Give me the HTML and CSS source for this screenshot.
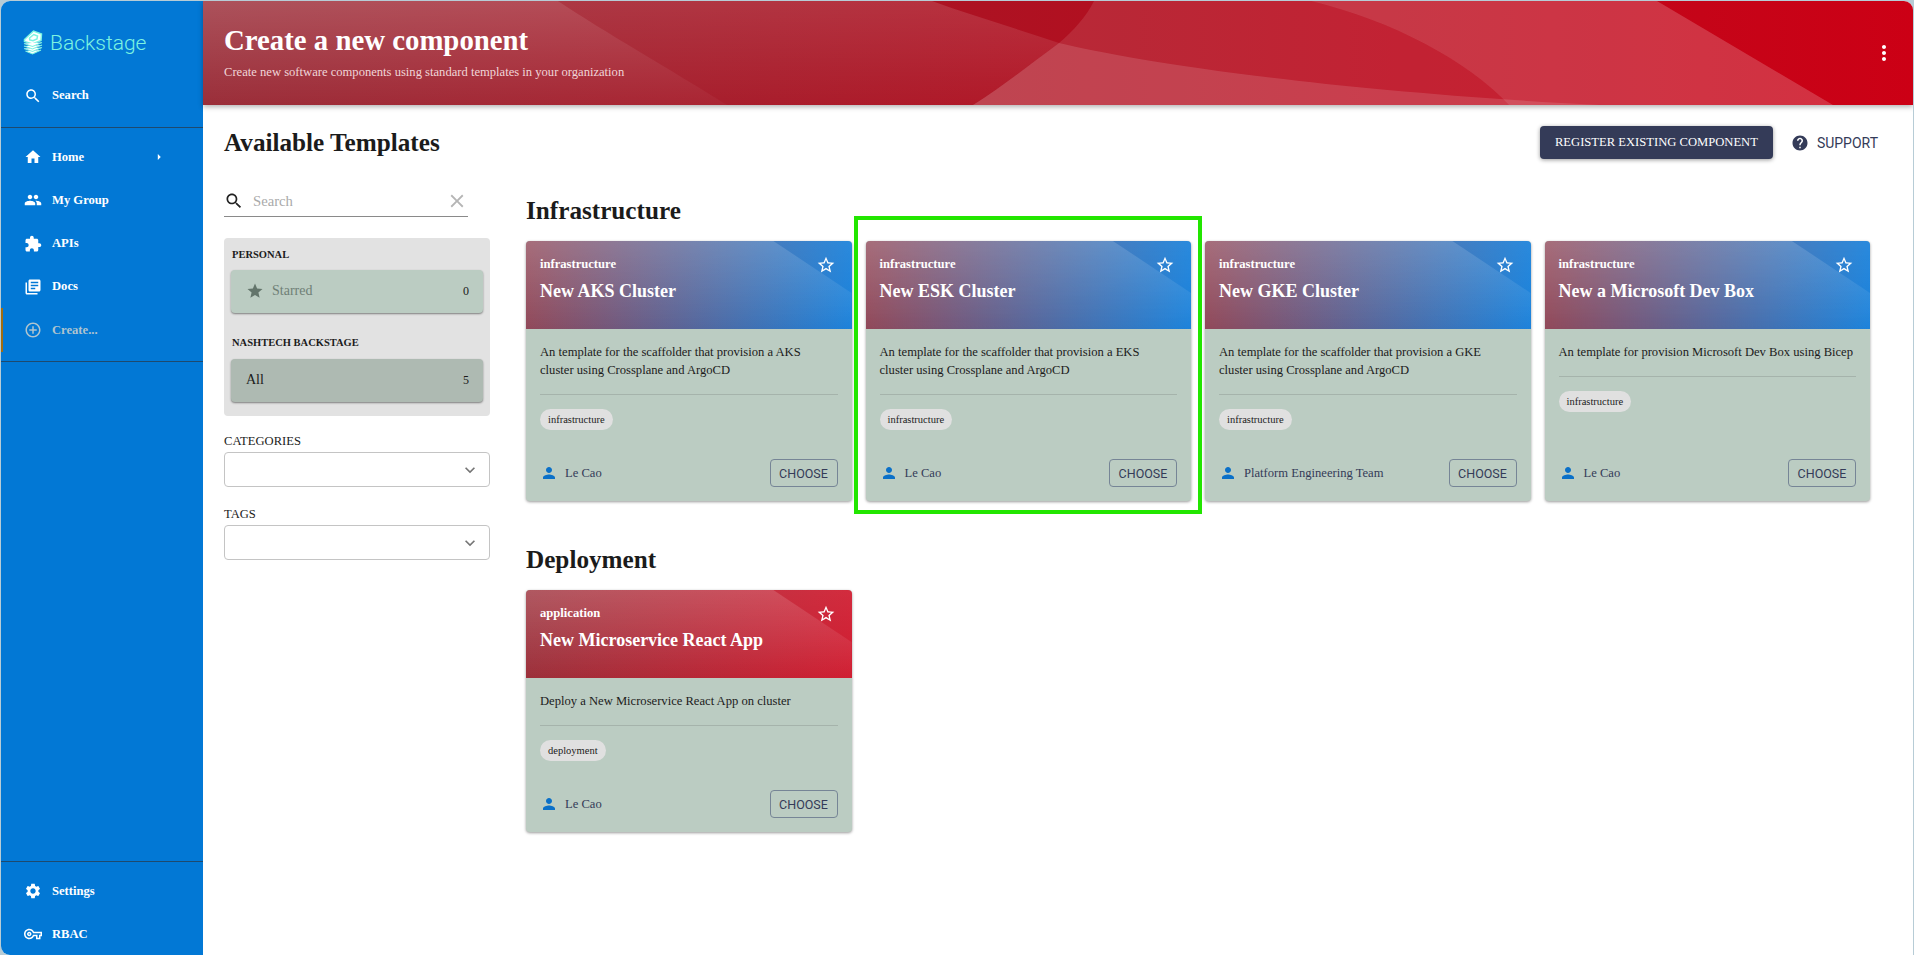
FILE: index.html
```html
<!DOCTYPE html>
<html lang="en">

<head>
    <meta charset="UTF-8">
    <meta name="viewport" content="width=device-width, initial-scale=1.0">
    <title>Create a new component</title>
    <link rel="stylesheet" href="styles.css">
</head>

<body>

    <svg class="sprite" width="0" height="0">
        <symbol id="i-search" viewBox="0 0 24 24"><path d="M15.5 14h-.79l-.28-.27C15.41 12.59 16 11.11 16 9.5 16 5.91 13.09 3 9.5 3S3 5.91 3 9.5 5.91 16 9.5 16c1.61 0 3.09-.59 4.23-1.57l.27.28v.79l5 4.99L20.49 19l-4.99-5zm-6 0C7.01 14 5 11.99 5 9.5S7.01 5 9.5 5 14 7.01 14 9.5 11.99 14 9.5 14z"/></symbol>
        <symbol id="i-home" viewBox="0 0 24 24"><path d="M10 20v-6h4v6h5v-8h3L12 3 2 12h3v8z"/></symbol>
        <symbol id="i-group" viewBox="0 0 24 24"><path d="M16 11c1.66 0 2.99-1.34 2.99-3S17.66 5 16 5c-1.66 0-3 1.34-3 3s1.34 3 3 3zm-8 0c1.66 0 2.99-1.34 2.99-3S9.66 5 8 5C6.34 5 5 6.34 5 8s1.34 3 3 3zm0 2c-2.33 0-7 1.17-7 3.5V19h14v-2.5c0-2.33-4.67-3.5-7-3.5zm8 0c-.29 0-.62.02-.97.05 1.16.84 1.97 1.97 1.97 3.45V19h6v-2.5c0-2.33-4.67-3.5-7-3.5z"/></symbol>
        <symbol id="i-puzzle" viewBox="0 0 24 24"><path d="M20.5 11H19V7c0-1.1-.9-2-2-2h-4V3.5C13 2.12 11.88 1 10.5 1S8 2.12 8 3.5V5H4c-1.1 0-1.99.9-1.99 2v3.8H3.5c1.49 0 2.7 1.21 2.7 2.7s-1.21 2.7-2.7 2.7H2V20c0 1.1.9 2 2 2h3.8v-1.5c0-1.49 1.21-2.7 2.7-2.7 1.49 0 2.7 1.21 2.7 2.7V22H17c1.1 0 2-.9 2-2v-4h1.5c1.38 0 2.5-1.12 2.5-2.5S21.88 11 20.5 11z"/></symbol>
        <symbol id="i-docs" viewBox="0 0 24 24"><path d="M4 6H2v14c0 1.1.9 2 2 2h14v-2H4V6zm16-4H8c-1.1 0-2 .9-2 2v12c0 1.1.9 2 2 2h12c1.1 0 2-.9 2-2V4c0-1.1-.9-2-2-2zm-1 9H9V9h10v2zm-4 4H9v-2h6v2zm4-8H9V5h10v2z"/></symbol>
        <symbol id="i-add" viewBox="0 0 24 24"><path d="M13 7h-2v4H7v2h4v4h2v-4h4v-2h-4V7zm-1-5C6.48 2 2 6.48 2 12s4.48 10 10 10 10-4.48 10-10S17.52 2 12 2zm0 18c-4.41 0-8-3.59-8-8s3.59-8 8-8 8 3.59 8 8-3.59 8-8 8z"/></symbol>
        <symbol id="i-settings" viewBox="0 0 24 24"><path d="M19.14 12.94c.04-.3.06-.61.06-.94 0-.32-.02-.64-.07-.94l2.03-1.58c.18-.14.23-.41.12-.61l-1.92-3.32c-.12-.22-.37-.29-.59-.22l-2.39.96c-.5-.38-1.03-.7-1.62-.94l-.36-2.54c-.04-.24-.24-.41-.48-.41h-3.84c-.24 0-.43.17-.47.41l-.36 2.54c-.59.24-1.13.57-1.62.94l-2.39-.96c-.22-.08-.47 0-.59.22L2.74 8.87c-.12.21-.08.47.12.61l2.03 1.58c-.05.3-.09.63-.09.94s.02.64.07.94l-2.03 1.58c-.18.14-.23.41-.12.61l1.92 3.32c.12.22.37.29.59.22l2.39-.96c.5.38 1.03.7 1.62.94l.36 2.54c.05.24.24.41.48.41h3.84c.24 0 .44-.17.47-.41l.36-2.54c.59-.24 1.13-.56 1.62-.94l2.39.96c.22.08.47 0 .59-.22l1.92-3.32c.12-.22.07-.47-.12-.61l-2.01-1.58zM12 15.6c-1.98 0-3.6-1.62-3.6-3.6s1.62-3.6 3.6-3.6 3.6 1.62 3.6 3.6-1.62 3.6-3.6 3.6z"/></symbol>
        <symbol id="i-key" viewBox="0 0 24 24"><path d="M22 19h-6v-4h-2.68c-1.14 2.42-3.6 4-6.32 4-3.86 0-7-3.14-7-7s3.14-7 7-7c2.72 0 5.17 1.58 6.32 4H24v6h-2v4zm-4-2h2v-4h2v-2H11.94l-.23-.67C11.01 8.34 9.11 7 7 7c-2.76 0-5 2.24-5 5s2.24 5 5 5c2.11 0 4.01-1.34 4.71-3.33l.23-.67H18v4zM7 15c-1.65 0-3-1.35-3-3s1.35-3 3-3 3 1.35 3 3-1.35 3-3 3zm0-4c-.55 0-1 .45-1 1s.45 1 1 1 1-.45 1-1-.45-1-1-1z"/></symbol>
        <symbol id="i-star" viewBox="0 0 24 24"><path d="M12 17.27L18.18 21l-1.64-7.03L22 9.24l-7.19-.61L12 2 9.19 8.63 2 9.24l5.46 4.73L5.82 21z"/></symbol>
        <symbol id="i-star-border" viewBox="0 0 24 24"><path d="M22 9.24l-7.19-.62L12 2 9.19 8.63 2 9.24l5.46 4.73L5.82 21 12 17.27 18.18 21l-1.63-7.03L22 9.24zM12 15.4l-3.76 2.27 1-4.28-3.32-2.88 4.38-.38L12 6.1l1.71 4.04 4.38.38-3.32 2.88 1 4.28L12 15.4z"/></symbol>
        <symbol id="i-person" viewBox="0 0 24 24"><path d="M12 12c2.21 0 4-1.79 4-4s-1.79-4-4-4-4 1.79-4 4 1.79 4 4 4zm0 2c-2.67 0-8 1.34-8 4v2h16v-2c0-2.66-5.33-4-8-4z"/></symbol>
        <symbol id="i-help" viewBox="0 0 24 24"><path d="M12 2C6.48 2 2 6.48 2 12s4.48 10 10 10 10-4.48 10-10S17.52 2 12 2zm1 17h-2v-2h2v2zm2.07-7.75l-.9.92C13.45 12.9 13 13.5 13 15h-2v-.5c0-1.1.45-2.1 1.17-2.83l1.24-1.26c.37-.36.59-.86.59-1.41 0-1.1-.9-2-2-2s-2 .9-2 2H8c0-2.21 1.79-4 4-4s4 1.79 4 4c0 .88-.36 1.68-.93 2.25z"/></symbol>
        <symbol id="i-close" viewBox="0 0 24 24"><path d="M19 6.41L17.59 5 12 10.59 6.41 5 5 6.41 10.59 12 5 17.59 6.41 19 12 13.41 17.59 19 19 17.59 13.41 12z"/></symbol>
        <symbol id="i-expand" viewBox="0 0 24 24"><path d="M16.59 8.59L12 13.17 7.41 8.59 6 10l6 6 6-6z"/></symbol>
        <symbol id="i-more" viewBox="0 0 24 24"><path d="M12 8c1.1 0 2-.9 2-2s-.9-2-2-2-2 .9-2 2 .9 2 2 2zm0 2c-1.1 0-2 .9-2 2s.9 2 2 2 2-.9 2-2-.9-2-2-2zm0 6c-1.1 0-2 .9-2 2s.9 2 2 2 2-.9 2-2-.9-2-2-2z"/></symbol>
        <symbol id="i-caret" viewBox="0 0 24 24"><path d="M10 17l5-5-5-5v10z"/></symbol>
    </svg>

    <div class="app">

        <nav class="sidebar">
            <div class="logo">
                <svg class="logo-mark" viewBox="0 0 20 25" fill="none" stroke="#7df3e1" stroke-width="1.1">
                    <path d="M1.5 9.5 10.5 1 18.5 4 18 10.5 9.5 14 1.5 11.5Z" stroke-width="1.5"/>
                    <path d="M6.5 8 10.8 4.5 14.5 6 14 9 10 10.8 6.8 10Z" stroke-width="1.5"/>
                    <path d="M1 13.5 9.5 16.5 19 12.5M1 16 9.5 19 19 15M1 18.5 9.5 21.5 19 17.5M2.5 21 9.5 24 18 20"/>
                </svg>
                <span class="logo-text">Backstage</span>
            </div>

            <a class="nav-item"><svg class="nav-icon"><use href="#i-search"/></svg>Search</a>
            <div class="nav-divider first"></div>

            <div class="nav-group">
                <a class="nav-item"><svg class="nav-icon"><use href="#i-home"/></svg>Home<svg class="nav-caret"><use href="#i-caret"/></svg></a>
                <a class="nav-item"><svg class="nav-icon"><use href="#i-group"/></svg>My Group</a>
                <a class="nav-item"><svg class="nav-icon"><use href="#i-puzzle"/></svg>APIs</a>
                <a class="nav-item"><svg class="nav-icon"><use href="#i-docs"/></svg>Docs</a>
                <a class="nav-item active"><svg class="nav-icon"><use href="#i-add"/></svg>Create...</a>
            </div>
            <div class="nav-divider second"></div>

            <div class="nav-bottom">
                <div class="nav-divider"></div>
                <a class="nav-item"><svg class="nav-icon"><use href="#i-settings"/></svg>Settings</a>
                <a class="nav-item"><svg class="nav-icon"><use href="#i-key"/></svg>RBAC</a>
            </div>
        </nav>

        <main class="main">
            <header class="page-header">
                <svg class="waves" viewBox="0 0 1710 104" preserveAspectRatio="none">
                    <defs>
                        <linearGradient id="fade-left" x1="0" y1="0" x2="0" y2="1">
                            <stop offset="0" stop-color="#fff" stop-opacity=".22"/>
                            <stop offset="1" stop-color="#fff" stop-opacity=".06"/>
                        </linearGradient>
                        <linearGradient id="fade-mid" x1="0" y1="0" x2="0" y2="1">
                            <stop offset="0" stop-color="#fff" stop-opacity=".13"/>
                            <stop offset="1" stop-color="#fff" stop-opacity=".03"/>
                        </linearGradient>
                    </defs>
                    <path d="M0 0H355C400 30 470 70 524 104H0Z" fill="url(#fade-left)"/>
                    <path d="M355 0H729C770 15 815 28 856 42 825 65 800 85 770 104H524C470 70 400 30 355 0Z" fill="url(#fade-mid)"/>
                    <path d="M891 0C883 16 870 30 856 42 825 65 800 85 770 104H1306C1265 60 1190 20 1108 0Z" fill="#fff" fill-opacity=".1"/>
                    <path d="M856 42C930 60 1120 90 1397 104H770C800 85 825 65 856 42Z" fill="#fff" fill-opacity=".13"/>
                    <path d="M1108 0C1190 20 1265 60 1306 104H1630L1454 0Z" fill="#fff" fill-opacity=".19"/>
                </svg>
                <div class="header-text">
                    <h1>Create a new component</h1>
                    <p>Create new software components using standard templates in your organization</p>
                </div>
                <svg class="header-more"><use href="#i-more"/></svg>
            </header>

            <div class="content">
                <div class="content-head">
                    <h2 class="content-title">Available Templates</h2>
                    <a class="btn-register">REGISTER EXISTING COMPONENT</a>
                    <a class="btn-support"><svg><use href="#i-help"/></svg>SUPPORT</a>
                </div>

                <div class="layout">
                    <aside class="filters">
                        <div class="search">
                            <svg class="search-icon"><use href="#i-search"/></svg>
                            <span class="search-text">Search</span>
                            <svg class="search-clear"><use href="#i-close"/></svg>
                        </div>

                        <div class="panel">
                            <div class="panel-label">PERSONAL</div>
                            <div class="panel-item starred">
                                <svg><use href="#i-star"/></svg>
                                <span>Starred</span>
                                <b>0</b>
                            </div>
                            <div class="panel-label second">NASHTECH BACKSTAGE</div>
                            <div class="panel-item selected">
                                <span>All</span>
                                <b>5</b>
                            </div>
                        </div>

                        <div class="field-label">CATEGORIES</div>
                        <div class="select"><svg><use href="#i-expand"/></svg></div>
                        <div class="field-label tags">TAGS</div>
                        <div class="select"><svg><use href="#i-expand"/></svg></div>
                    </aside>

                    <section class="templates">
                        <h3>Infrastructure</h3>
                        <div class="grid">

                            <article class="card">
                                <div class="card-head blue">
                                    <div class="card-type">infrastructure</div>
                                    <div class="card-title">New AKS Cluster</div>
                                    <svg class="card-star"><use href="#i-star-border"/></svg>
                                </div>
                                <div class="card-body">
                                    <p>An template for the scaffolder that provision a AKS cluster using Crossplane and ArgoCD</p>
                                    <hr>
                                    <span class="chip">infrastructure</span>
                                    <div class="card-foot">
                                        <svg class="owner-icon"><use href="#i-person"/></svg>
                                        <span class="owner">Le Cao</span>
                                        <a class="btn-choose">CHOOSE</a>
                                    </div>
                                </div>
                            </article>

                            <article class="card">
                                <div class="highlight"></div>
                                <div class="card-head blue">
                                    <div class="card-type">infrastructure</div>
                                    <div class="card-title">New ESK Cluster</div>
                                    <svg class="card-star"><use href="#i-star-border"/></svg>
                                </div>
                                <div class="card-body">
                                    <p>An template for the scaffolder that provision a EKS cluster using Crossplane and ArgoCD</p>
                                    <hr>
                                    <span class="chip">infrastructure</span>
                                    <div class="card-foot">
                                        <svg class="owner-icon"><use href="#i-person"/></svg>
                                        <span class="owner">Le Cao</span>
                                        <a class="btn-choose">CHOOSE</a>
                                    </div>
                                </div>
                            </article>

                            <article class="card">
                                <div class="card-head blue">
                                    <div class="card-type">infrastructure</div>
                                    <div class="card-title">New GKE Cluster</div>
                                    <svg class="card-star"><use href="#i-star-border"/></svg>
                                </div>
                                <div class="card-body">
                                    <p>An template for the scaffolder that provision a GKE cluster using Crossplane and ArgoCD</p>
                                    <hr>
                                    <span class="chip">infrastructure</span>
                                    <div class="card-foot">
                                        <svg class="owner-icon"><use href="#i-person"/></svg>
                                        <span class="owner">Platform Engineering Team</span>
                                        <a class="btn-choose">CHOOSE</a>
                                    </div>
                                </div>
                            </article>

                            <article class="card">
                                <div class="card-head blue">
                                    <div class="card-type">infrastructure</div>
                                    <div class="card-title">New a Microsoft Dev Box</div>
                                    <svg class="card-star"><use href="#i-star-border"/></svg>
                                </div>
                                <div class="card-body">
                                    <p>An template for provision Microsoft Dev Box using Bicep</p>
                                    <hr>
                                    <span class="chip">infrastructure</span>
                                    <div class="card-foot">
                                        <svg class="owner-icon"><use href="#i-person"/></svg>
                                        <span class="owner">Le Cao</span>
                                        <a class="btn-choose">CHOOSE</a>
                                    </div>
                                </div>
                            </article>
                        </div>

                        <h3 class="second">Deployment</h3>
                        <div class="grid">
                            <article class="card">
                                <div class="card-head red">
                                    <div class="card-type">application</div>
                                    <div class="card-title">New Microservice React App</div>
                                    <svg class="card-star"><use href="#i-star-border"/></svg>
                                </div>
                                <div class="card-body">
                                    <p>Deploy a New Microservice React App on cluster</p>
                                    <hr>
                                    <span class="chip">deployment</span>
                                    <div class="card-foot">
                                        <svg class="owner-icon"><use href="#i-person"/></svg>
                                        <span class="owner">Le Cao</span>
                                        <a class="btn-choose">CHOOSE</a>
                                    </div>
                                </div>
                            </article>
                        </div>
                    </section>
                </div>
            </div>
        </main>
    </div>

</body>

</html>
```

FILE: styles.css
```css
* {
    box-sizing: border-box;
}

html, body {
    height: 100%;
}

body {
    margin: 0;
    padding: 1px 1px 0;
    overflow: hidden;
    background-color: #b7ccd6;
    font-family: "Liberation Serif", serif;
    color: #1b1b1b;
}

.sprite {
    position: absolute;
}

svg {
    fill: currentColor;
}

.app {
    display: flex;
    height: 954px;
    background-color: #fff;
    border-radius: 9px 9px 0 9px;
    overflow: hidden;
}

/* sidebar */
.sidebar {
    display: flex;
    flex-direction: column;
    flex: 0 0 202px;
    background-color: #0278d5;
    color: #fff;
}

.logo {
    display: flex;
    align-items: center;
    height: 73px;
    padding: 11px 0 1px 22px;
}

.logo-mark {
    width: 20px;
    height: 25px;
    margin-right: 7px;
}

.logo-text {
    font-family: Roboto, sans-serif;
    font-size: 21px;
    font-weight: 300;
    color: #7df3e1;
}

.nav-item {
    display: flex;
    align-items: center;
    height: 43.2px;
    padding-left: 23px;
    font-size: 12.6px;
    font-weight: 700;
}

.nav-item.active {
    border-left: 2px solid #a16c10;
    padding-left: 21px;
    color: #afc4cf;
}

.nav-icon {
    flex: none;
    width: 18px;
    height: 18px;
    margin-right: 10px;
}

.nav-caret {
    width: 14px;
    height: 14px;
    margin-left: 68px;
}

.nav-divider {
    height: 1px;
    background-color: #1e4a6e;
}

.nav-divider.first {
    margin-top: 10px;
    margin-bottom: 7.5px;
}

.nav-divider.second {
    margin-top: 9.5px;
}

.nav-bottom {
    margin-top: auto;
    margin-bottom: -1px;
}

.nav-bottom .nav-divider {
    margin-bottom: 8px;
}

/* header */
.main {
    flex: 1;
    min-width: 0;
}

.page-header {
    position: relative;
    display: flex;
    align-items: flex-start;
    justify-content: space-between;
    height: 104px;
    padding: 22px 21px 0;
    background-image: linear-gradient(90deg, #94212d, #cc0015);
    box-shadow: 0 2px 5px rgba(0, 0, 0, .3);
    color: #fff;
}

.waves {
    position: absolute;
    top: 0;
    left: 0;
    width: 100%;
    height: 100%;
}

.header-text,
.header-more {
    position: relative;
}

.header-text h1 {
    margin: 0;
    font-size: 28.8px;
    line-height: 34px;
    font-weight: 700;
}

.header-text p {
    margin: 7px 0 0;
    font-size: 12.6px;
    line-height: 16px;
    color: #f0d5d8;
}

.header-more {
    width: 24px;
    height: 24px;
    margin: 18px -4px 0 0;
}

/* content */
.content {
    padding: 0 43px 0 21px;
}

.content-head {
    display: flex;
    align-items: center;
    height: 33px;
    margin: 21px -8px 0 0;
}

.content-title {
    margin: 1px auto 0 0;
    font-size: 25.2px;
    color: #1b1b1b;
}

.btn-register {
    display: flex;
    align-items: center;
    height: 33px;
    padding: 0 15px;
    border-radius: 4px;
    background-color: #343b58;
    color: #fff;
    font-size: 12.6px;
    box-shadow: 0 1px 4px rgba(0, 0, 0, .4);
}

.btn-support {
    display: flex;
    align-items: center;
    margin-left: 18px;
    font-family: Roboto, sans-serif;
    font-size: 14px;
    color: #343b58;
}

.btn-support svg {
    width: 18px;
    height: 18px;
    margin-right: 8px;
}

.layout {
    display: flex;
    gap: 36px;
    margin-top: 26px;
}

/* filters */
.filters {
    flex: 0 0 266px;
}

.search {
    display: flex;
    align-items: center;
    width: 244px;
    height: 32px;
    border-bottom: 1px solid #8a8a8a;
}

.search-icon {
    width: 20px;
    height: 20px;
    color: #222;
}

.search-text {
    flex: 1;
    margin: 1px 0 0 9px;
    font-size: 14.7px;
    color: #aaa;
}

.search-clear {
    width: 22px;
    height: 22px;
    color: #b5b5b5;
}

.panel {
    margin-top: 21px;
    padding: 9px 7px 14px;
    border-radius: 4px;
    background-color: #e2e2e2;
}

.panel-label {
    padding-left: 1px;
    font-size: 10.5px;
    line-height: 16px;
    font-weight: 700;
}

.panel-label.second {
    margin-top: 22px;
}

.panel-item {
    display: flex;
    align-items: center;
    height: 43px;
    margin-top: 7px;
    padding: 0 14px 1px 15px;
    border-radius: 4px;
    background-color: #bbccc2;
    box-shadow: 0 1px 2px rgba(0, 0, 0, .45);
    font-size: 14px;
}

.panel-item svg {
    width: 18px;
    height: 18px;
    margin-right: 8px;
    color: #63756b;
}

.panel-item span {
    flex: 1;
}

.panel-item b {
    font-weight: 400;
    font-size: 12px;
}

.panel-item.starred span {
    color: #6f7f76;
}

.panel-item.selected {
    margin-top: 8px;
    background-color: #aebab2;
}

.field-label {
    margin-top: 18px;
    font-size: 12.6px;
    line-height: 14px;
}

.field-label.tags {
    margin-top: 20px;
}

.select {
    display: flex;
    align-items: center;
    justify-content: flex-end;
    height: 35px;
    margin-top: 4px;
    padding-right: 9px;
    border: 1px solid #c4c4c4;
    border-radius: 4px;
    color: #757575;
}

.select svg {
    width: 20px;
    height: 20px;
}

/* template cards */
.templates {
    flex: 1;
    min-width: 0;
    padding-top: 12px;
}

.templates h3 {
    margin: 0 0 16px;
    font-size: 25.2px;
    line-height: 28px;
}

.templates h3.second {
    margin-top: 45px;
}

.grid {
    display: grid;
    grid-template-columns: repeat(4, 1fr);
    gap: 14px;
}

.card {
    position: relative;
    display: flex;
    flex-direction: column;
    border-radius: 4px;
    background-color: #bbccc2;
    box-shadow: 0 1px 3px rgba(0, 0, 0, .4);
}

.highlight {
    position: absolute;
    top: -25px;
    right: -11px;
    bottom: -13px;
    left: -12px;
    border: 4px solid #22e600;
    pointer-events: none;
}

.card-head {
    position: relative;
    height: 88px;
    padding: 15px 14px 0;
    border-radius: 4px 4px 0 0;
    color: #fff;
}

.card-head.blue {
    background-image:
        linear-gradient(180deg, rgba(255, 255, 255, .08), rgba(255, 255, 255, 0)),
        linear-gradient(90deg, #8f4556, #1880da);
}

.card-head.red {
    background-image:
        linear-gradient(180deg, rgba(255, 255, 255, .08), rgba(255, 255, 255, 0)),
        linear-gradient(90deg, #9a2b36, #cf1a2e);
}

.card-head::after {
    content: "";
    position: absolute;
    inset: 0;
    border-radius: 4px 4px 0 0;
    background-image: linear-gradient(180deg, rgba(255, 255, 255, .15), rgba(255, 255, 255, .02));
    clip-path: polygon(0 0, 76% 0, 100% 59%, 100% 100%, 0 100%);
}

.card-type {
    font-size: 12.6px;
    line-height: 16px;
    font-weight: 700;
}

.card-title {
    margin-top: 9px;
    font-size: 18px;
    line-height: 20px;
    font-weight: 700;
}

.card-type,
.card-title,
.card-star {
    position: relative;
    z-index: 1;
}

.card-star {
    position: absolute;
    top: 14px;
    right: 16px;
    width: 20px;
    height: 20px;
}

.card-body {
    display: flex;
    flex: 1;
    flex-direction: column;
    align-items: flex-start;
    padding: 14px;
}

.card-body p {
    margin: 0 0 15px;
    padding-right: 2px;
    font-size: 12.6px;
    line-height: 18px;
}

.card-body hr {
    width: 100%;
    height: 1px;
    margin: 0 0 14px;
    border: 0;
    background-color: #a5b3ab;
}

.chip {
    height: 21px;
    padding: 0 8px;
    border-radius: 11px;
    background-color: #e0e0e0;
    font-size: 10.5px;
    line-height: 21px;
}

.card-foot {
    display: flex;
    align-items: center;
    width: 100%;
    margin-top: auto;
    padding-top: 29px;
}

.owner-icon {
    width: 18px;
    height: 18px;
    color: #0a70c8;
}

.owner {
    flex: 1;
    margin-left: 7px;
    font-size: 12.6px;
    color: #343b58;
}

.btn-choose {
    display: flex;
    align-items: center;
    justify-content: center;
    width: 68px;
    height: 28px;
    border: 1px solid #768596;
    border-radius: 4px;
    font-family: Roboto, sans-serif;
    font-size: 12.5px;
    color: #343b58;
}
```
